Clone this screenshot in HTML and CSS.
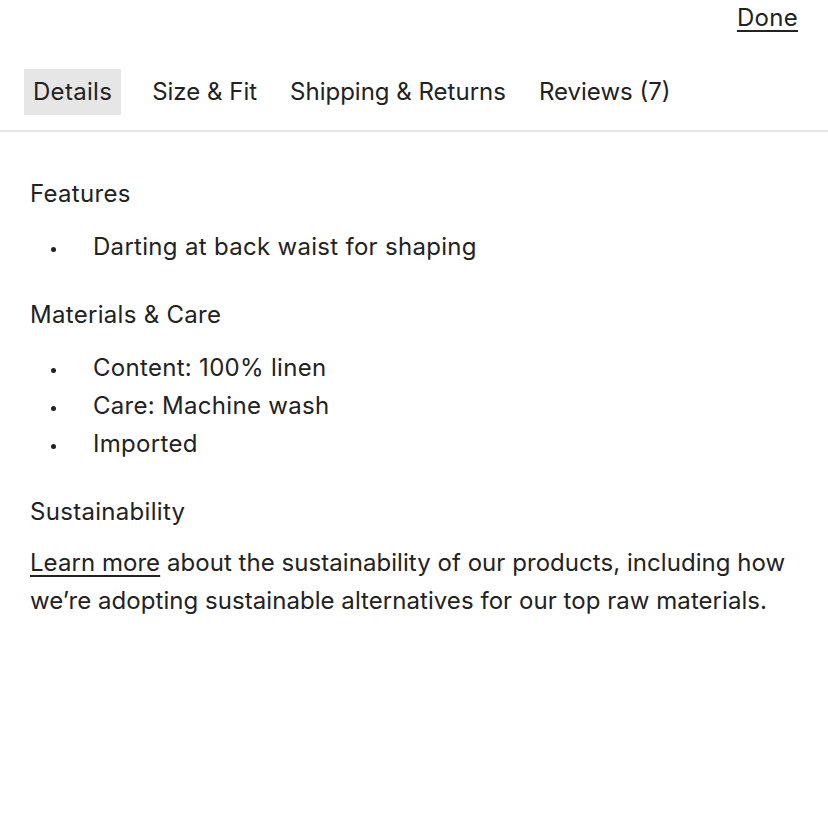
FILE: index.html
```html
<!DOCTYPE html>
<html lang="en">
<head>
<meta charset="utf-8">
<link rel="stylesheet" href="styles.css">
</head>
<body>
<div class="top">
  <a class="done" href="#">Done</a>
</div>
<nav class="tabs">
  <span class="tab active">Details</span>
  <span class="tab">Size &amp; Fit</span>
  <span class="tab">Shipping &amp; Returns</span>
  <span class="tab">Reviews (7)</span>
</nav>
<main class="content">
  <h3 class="heading">Features</h3>
  <ul class="list">
    <li>Darting at back waist for shaping</li>
  </ul>
  <h3 class="heading">Materials &amp; Care</h3>
  <ul class="list">
    <li>Content: 100% linen</li>
    <li>Care: Machine wash</li>
    <li>Imported</li>
  </ul>
  <h3 class="heading tight">Sustainability</h3>
  <p class="para"><a href="#">Learn more</a> about the sustainability of our products, including how we’re adopting sustainable alternatives for our top raw materials.</p>
</main>
</body>
</html>
```
FILE: styles.css
```css
* { box-sizing: border-box; }
body {
  margin: 0;
  font-family: Inter, "Noto Sans", sans-serif;
  font-size: 24px;
  letter-spacing: 0.3px;
  color: #222;
  background: #fff;
}
a { color: #222; }
.top {
  display: flex;
  justify-content: flex-end;
  padding: 3px 30px 0 0;
  height: 69px;
}
.done {
  line-height: 30px;
  text-decoration: underline;
  text-decoration-thickness: 2px;
  text-underline-offset: 4px;
}
.tabs {
  display: flex;
  gap: 15px;
  padding: 0 24px 15px;
  border-bottom: 2px solid #e6e6e6;
}
.tab {
  line-height: 30px;
  padding: 8px 9px;
  letter-spacing: 0;
}
.tab.active { background: #e6e6e6; margin-right: 7px; letter-spacing: 0.3px; }
.content { padding: 47px 30px 0; }
.heading {
  font-weight: 400;
  font-size: 24px;
  line-height: 30px;
  margin: 0 0 19px;
}
.heading.tight { margin-bottom: 17px; }
.list {
  list-style: none;
  margin: 0 0 34px;
  padding: 0;
}
.list li {
  display: flex;
  align-items: center;
  line-height: 38px;
}
.list li::before {
  content: "";
  width: 5px;
  height: 5px;
  border-radius: 50%;
  background: #222;
  margin: 4px 37px 0 21px;
  flex: none;
}
.para {
  line-height: 38px;
  margin: 0;
  letter-spacing: 0.05px;
}
.para a { text-underline-offset: 4px; }
```
